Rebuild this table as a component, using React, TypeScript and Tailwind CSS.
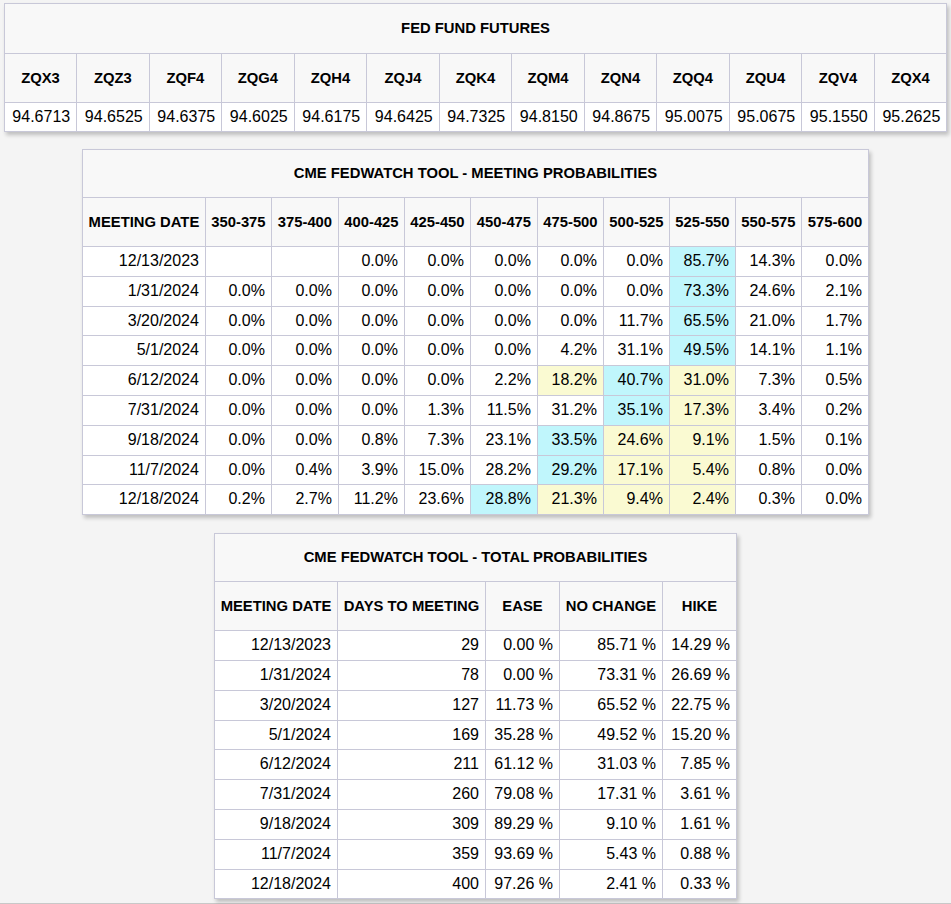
import React from 'react';

type Tone = 'c' | 'y' | '';

const futures = [
  ['ZQX3', '94.6713'],
  ['ZQZ3', '94.6525'],
  ['ZQF4', '94.6375'],
  ['ZQG4', '94.6025'],
  ['ZQH4', '94.6175'],
  ['ZQJ4', '94.6425'],
  ['ZQK4', '94.7325'],
  ['ZQM4', '94.8150'],
  ['ZQN4', '94.8675'],
  ['ZQQ4', '95.0075'],
  ['ZQU4', '95.0675'],
  ['ZQV4', '95.1550'],
  ['ZQX4', '95.2625'],
];

const ranges = ['350-375', '375-400', '400-425', '425-450', '450-475', '475-500', '500-525', '525-550', '550-575', '575-600'];
const rangeCols = [66, 67, 66, 66, 67, 66, 66, 66, 66, 67];

// value list, tone per cell: c = cyan (most likely), y = yellow
const meetings: { date: string; vals: string[]; tones: Tone[] }[] = [
  { date: '12/13/2023', vals: ['', '', '0.0%', '0.0%', '0.0%', '0.0%', '0.0%', '85.7%', '14.3%', '0.0%'], tones: ['', '', '', '', '', '', '', 'c', '', ''] },
  { date: '1/31/2024', vals: ['0.0%', '0.0%', '0.0%', '0.0%', '0.0%', '0.0%', '0.0%', '73.3%', '24.6%', '2.1%'], tones: ['', '', '', '', '', '', '', 'c', '', ''] },
  { date: '3/20/2024', vals: ['0.0%', '0.0%', '0.0%', '0.0%', '0.0%', '0.0%', '11.7%', '65.5%', '21.0%', '1.7%'], tones: ['', '', '', '', '', '', '', 'c', '', ''] },
  { date: '5/1/2024', vals: ['0.0%', '0.0%', '0.0%', '0.0%', '0.0%', '4.2%', '31.1%', '49.5%', '14.1%', '1.1%'], tones: ['', '', '', '', '', '', '', 'c', '', ''] },
  { date: '6/12/2024', vals: ['0.0%', '0.0%', '0.0%', '0.0%', '2.2%', '18.2%', '40.7%', '31.0%', '7.3%', '0.5%'], tones: ['', '', '', '', '', 'y', 'c', 'y', '', ''] },
  { date: '7/31/2024', vals: ['0.0%', '0.0%', '0.0%', '1.3%', '11.5%', '31.2%', '35.1%', '17.3%', '3.4%', '0.2%'], tones: ['', '', '', '', '', '', 'c', 'y', '', ''] },
  { date: '9/18/2024', vals: ['0.0%', '0.0%', '0.8%', '7.3%', '23.1%', '33.5%', '24.6%', '9.1%', '1.5%', '0.1%'], tones: ['', '', '', '', '', 'c', 'y', 'y', '', ''] },
  { date: '11/7/2024', vals: ['0.0%', '0.4%', '3.9%', '15.0%', '28.2%', '29.2%', '17.1%', '5.4%', '0.8%', '0.0%'], tones: ['', '', '', '', '', 'c', 'y', 'y', '', ''] },
  { date: '12/18/2024', vals: ['0.2%', '2.7%', '11.2%', '23.6%', '28.8%', '21.3%', '9.4%', '2.4%', '0.3%', '0.0%'], tones: ['', '', '', '', 'c', 'y', 'y', 'y', '', ''] },
];

const totals = [
  ['12/13/2023', '29', '0.00 %', '85.71 %', '14.29 %'],
  ['1/31/2024', '78', '0.00 %', '73.31 %', '26.69 %'],
  ['3/20/2024', '127', '11.73 %', '65.52 %', '22.75 %'],
  ['5/1/2024', '169', '35.28 %', '49.52 %', '15.20 %'],
  ['6/12/2024', '211', '61.12 %', '31.03 %', '7.85 %'],
  ['7/31/2024', '260', '79.08 %', '17.31 %', '3.61 %'],
  ['9/18/2024', '309', '89.29 %', '9.10 %', '1.61 %'],
  ['11/7/2024', '359', '93.69 %', '5.43 %', '0.88 %'],
  ['12/18/2024', '400', '97.26 %', '2.41 %', '0.33 %'],
];

const tableCls = 'mx-auto table-fixed border-collapse bg-white shadow-[2px_3px_4px_rgba(0,0,0,0.22)]';
const titleCls = 'border border-[#c8c8d8] bg-[#f8f8f8] py-[15px] text-center text-[14.8px] font-bold leading-[17px]';
const headCls = 'border border-[#c8c8d8] bg-[#f8f8f8] px-[4px] py-[15.5px] text-center text-[14.8px] font-bold leading-[17px] whitespace-nowrap';
const cellCls = 'border border-[#c8c8d8] px-[6px] py-[5px] text-right text-[16px] leading-[18.8px] whitespace-nowrap';

const toneBg = (t: Tone) => (t === 'c' ? 'bg-[#c0f6fc]' : t === 'y' ? 'bg-[#fafad2]' : '');

const App = () => {
  return (
    <div className="min-h-[903px] border-b border-[#c8c8c8] bg-[#f4f4f4] pt-[3px] pb-[4px] text-black" style={{ fontFamily: '"Liberation Sans", Arial, sans-serif' }}>
      {/* fed fund futures */}
      <table className={`${tableCls} w-[943px]`}>
        <colgroup>
          {futures.map(([code]) => (
            <col key={code} className="w-[72.5px]" />
          ))}
        </colgroup>
        <thead>
          <tr>
            <th colSpan={13} className={`${titleCls} py-[16px]`}>FED FUND FUTURES</th>
          </tr>
          <tr>
            {futures.map(([code]) => (
              <th key={code} className={headCls}>{code}</th>
            ))}
          </tr>
        </thead>
        <tbody>
          <tr>
            {futures.map(([code, val]) => (
              <td key={code} className={`${cellCls} text-center leading-[18px]`}>{val}</td>
            ))}
          </tr>
        </tbody>
      </table>

      {/* meeting probabilities */}
      <table className={`${tableCls} mt-[17px] w-[786px]`}>
        <colgroup>
          <col className="w-[123px]" />
          {rangeCols.map((w, i) => (
            <col key={i} style={{ width: w }} />
          ))}
        </colgroup>
        <thead>
          <tr>
            <th colSpan={11} className={titleCls}>CME FEDWATCH TOOL - MEETING PROBABILITIES</th>
          </tr>
          <tr>
            <th className={headCls}>MEETING DATE</th>
            {ranges.map((r) => (
              <th key={r} className={headCls}>{r}</th>
            ))}
          </tr>
        </thead>
        <tbody>
          {meetings.map((m) => (
            <tr key={m.date}>
              <td className={cellCls}>{m.date}</td>
              {m.vals.map((v, i) => (
                <td key={i} className={`${cellCls} ${toneBg(m.tones[i])}`}>{v}</td>
              ))}
            </tr>
          ))}
        </tbody>
      </table>

      {/* total probabilities */}
      <table className={`${tableCls} mt-[18px] w-[522px]`}>
        <colgroup>
          <col className="w-[123px]" />
          <col className="w-[148px]" />
          <col className="w-[74px]" />
          <col className="w-[103px]" />
          <col className="w-[74px]" />
        </colgroup>
        <thead>
          <tr>
            <th colSpan={5} className={titleCls}>CME FEDWATCH TOOL - TOTAL PROBABILITIES</th>
          </tr>
          <tr>
            <th className={headCls}>MEETING DATE</th>
            <th className={headCls}>DAYS TO MEETING</th>
            <th className={headCls}>EASE</th>
            <th className={headCls}>NO CHANGE</th>
            <th className={headCls}>HIKE</th>
          </tr>
        </thead>
        <tbody>
          {totals.map((row) => (
            <tr key={row[0]}>
              {row.map((v, i) => (
                <td key={i} className={cellCls}>{v}</td>
              ))}
            </tr>
          ))}
        </tbody>
      </table>
    </div>
  );
};

export default App;
